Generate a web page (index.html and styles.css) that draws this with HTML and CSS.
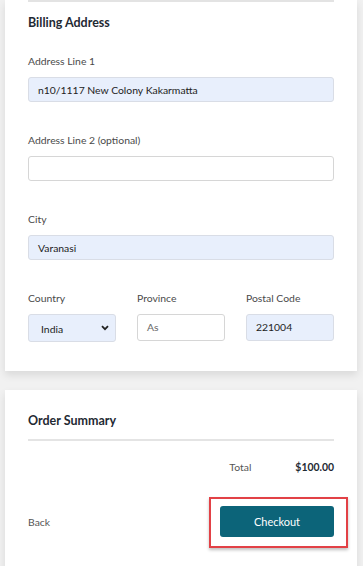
FILE: index.html
```html
<!DOCTYPE html>
<html>
<head>
<meta charset="utf-8">
<link rel="stylesheet" href="styles.css">
</head>
<body>
<div class="page">
  <section class="card billing">
    <div class="topline"></div>
    <h2 class="title">Billing Address</h2>
    <div class="field">
      <label class="label">Address Line 1</label>
      <div class="input filled">n10/1117 New Colony Kakarmatta</div>
    </div>
    <div class="field">
      <label class="label">Address Line 2 (optional)</label>
      <div class="input"></div>
    </div>
    <div class="field">
      <label class="label">City</label>
      <div class="input filled">Varanasi</div>
    </div>
    <div class="row3">
      <div class="field col">
        <label class="label">Country</label>
        <div class="input filled select"><span class="sel-text">India</span>
          <svg class="chev" width="8" height="6" viewBox="0 0 8 6"><path d="M1 1.2 L4 4.2 L7 1.2" fill="none" stroke="#222" stroke-width="1.8"/></svg>
        </div>
      </div>
      <div class="field col">
        <label class="label">Province</label>
        <div class="input short placeholder">As</div>
      </div>
      <div class="field col">
        <label class="label">Postal Code</label>
        <div class="input filled short">221004</div>
      </div>
    </div>
  </section>
  <section class="card summary">
    <h2 class="title">Order Summary</h2>
    <div class="divider"></div>
    <div class="total-row">
      <span class="total-label">Total</span>
      <span class="total-value">$100.00</span>
    </div>
    <div class="actions">
      <a class="back">Back</a>
      <button class="checkout">Checkout</button>
      <div class="highlight"></div>
    </div>
  </section>
</div>
</body>
</html>
```
FILE: styles.css
```css
html, body {
  margin: 0;
  padding: 0;
  background: #f1f1f1;
  font-family: Lato, "Open Sans", sans-serif;
  color: #222;
}
.page {
  padding: 0 6px 0 5px;
  width: 352px;
  height: 566px;
  overflow: hidden;
}
.card {
  background: #fff;
  padding: 0 23px;
  box-shadow: 0 4px 8px rgba(0,0,0,0.10);
}
.billing {
  height: 371px;
  box-sizing: border-box;
}
.topline {
  height: 2px;
  background: #e3e3e3;
}
.title {
  margin: 13px 0 0;
  font-size: 12.5px;
  line-height: 16px;
  font-weight: 700;
  color: #1f2a33;
}
.billing .title {
  margin-bottom: 23px;
}
.field {
  display: flex;
  flex-direction: column;
}
.field + .field, .row3 {
  margin-top: 31px;
}
.label {
  font-size: 10.4px;
  line-height: 14px;
  color: #4a4a4a;
  margin-bottom: 9px;
}
.input {
  height: 25px;
  box-sizing: border-box;
  border: 1px solid #d6d6d6;
  border-radius: 3px;
  background: #fff;
  font-size: 10.4px;
  color: #222;
  padding: 0 9px;
  display: flex;
  align-items: center;
}
.input.filled {
  background: #e8effc;
  border-color: #d9dde6;
}
.input.placeholder {
  color: #666;
}
.row3 {
  display: flex;
  justify-content: space-between;
}
.row3 .field + .field {
  margin-top: 0;
}
.col {
  width: 88px;
}
.select {
  height: 28px;
  justify-content: space-between;
  padding: 0 6px 0 12px;
}
.sel-text {
  padding-top: 1px;
}
.short {
  height: 27px;
  padding-bottom: 2px;
}
.summary {
  margin-top: 19px;
  height: 190px;
  padding-top: 1px;
}
.summary .title {
  margin-top: 22px;
}
.divider {
  height: 2px;
  background: #e4e4e4;
  margin-top: 10px;
}
.total-row {
  display: flex;
  justify-content: flex-end;
  gap: 44px;
  margin-top: 19px;
  font-size: 10.4px;
  line-height: 14px;
}
.total-label {
  color: #555;
}
.total-value {
  font-weight: 700;
  color: #1f2a33;
}
.actions {
  position: relative;
  display: flex;
  justify-content: space-between;
  align-items: center;
  margin-top: 32px;
}
.back {
  font-size: 10.4px;
  color: #555;
}
.checkout {
  width: 114px;
  height: 31px;
  border: none;
  border-radius: 3px;
  background: #0c6479;
  color: #fff;
  font-family: Lato, "Open Sans", sans-serif;
  font-size: 11px;
}
.highlight {
  position: absolute;
  left: 181px;
  top: -9px;
  width: 139px;
  height: 51px;
  box-sizing: border-box;
  border: 2px solid #e24146;
  box-shadow: 0 2px 3px rgba(0,0,0,0.25);
}
```
